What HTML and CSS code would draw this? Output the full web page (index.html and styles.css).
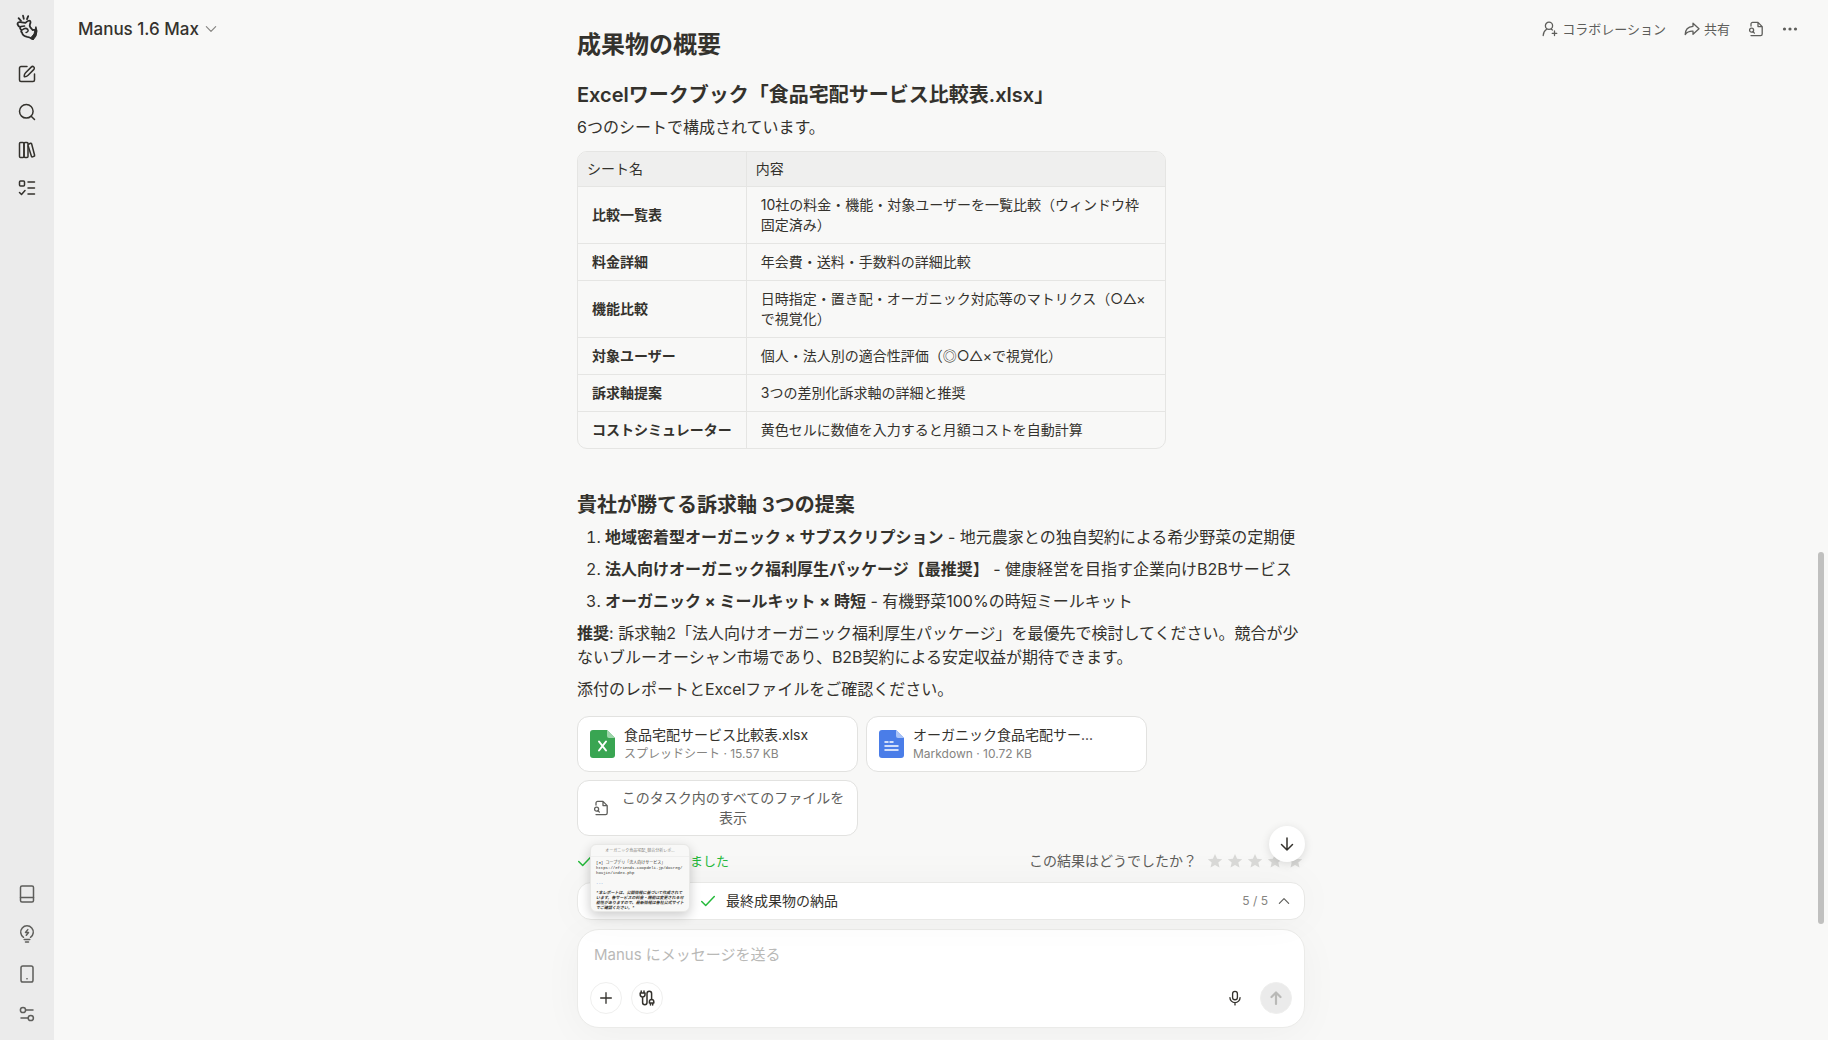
FILE: index.html
```html
<!DOCTYPE html>
<html lang="ja">
<head>
    <meta charset="UTF-8">
    <meta name="viewport" content="width=device-width, initial-scale=1.0">
    <title>Manus</title>
    <link rel="stylesheet" href="styles.css">
</head>
<body>
    <aside class="sidebar">
        <a class="logo" href="#" aria-label="Manus">
            <svg width="22" height="28" viewBox="0 0 22 28">
                <path d="M2.6 4.2l2.4 2.600M7 1.600l.8 3.200M12.200 2.200l-1.200 3" stroke-width="1.8"/>
                <path d="M1.6 10.6c-.4-1.7.8-2.6 2.6-2.4l5.2.6c1.2-1.2 2.6-2.6 4-2.2 1.6.4 1.2 2.2.6 3.4-.6 1.4-.4 2.4.4 3.4l2.2 2.6c1.4-.2 2.6-.2 3.6.4l-1.2 5.2-3.2 3.2c-1.4-1.2-2.8-1.8-4.6-2-2.6-.4-4.8-1.8-5.2-4.2-.8-.8-1-1.8-.6-2.8-1.4-.6-1.6-1.8-1-2.8-1.4-.2-2.4-1-2.8-2.4z" stroke-width="1.8"/>
                <path d="M5 12.600l3.600-.6M6.500 15.800c1.800-1.600 4-1.600 5.200-.4 1 1.200.2 2.800-1.600 3" stroke-width="1.5"/>
                <path d="M20 13l1 4-1 5-3 4-2-2.500 3-3.500 1-4z" fill="currentColor" stroke-width="1"/>
            </svg>
        </a>
        <nav class="side-nav">
            <button class="side-btn" aria-label="新しいタスク">
                <svg class="icon" viewBox="0 0 18 18"><path d="M9 1.500H3A1.500 1.500 0 0 0 1.500 3v12A1.500 1.500 0 0 0 3 16.500h12a1.500 1.500 0 0 0 1.500-1.500V9"/><path d="M6.300 11.700c-.300-1.700.200-2.800 1.300-3.900l5.600-5.700c.8-.8 1.900-.8 2.600-.1s.7 1.800-.1 2.600l-5.600 5.700c-1.100 1.100-2.200 1.600-3.800 1.400z"/></svg>
            </button>
            <button class="side-btn" aria-label="検索">
                <svg class="icon" viewBox="0 0 18 18"><circle cx="8.300" cy="8.300" r="6.800"/><path d="M13.200 13.200l3.300 3.300"/></svg>
            </button>
            <button class="side-btn" aria-label="ライブラリ">
                <svg class="icon" viewBox="0 0 18 18"><rect x="1.500" y="1.500" width="4.500" height="15" rx="1"/><rect x="6" y="1.500" width="4" height="15" rx="1"/><path d="M10.500 3.200l2-.9c.5-.2.900 0 1.100.5l3 11.500c.1.500-.1.900-.6 1l-1.500.6c-.5.200-.9 0-1-.5L10.200 5"/></svg>
            </button>
            <button class="side-btn" aria-label="タスク一覧">
                <svg class="icon" viewBox="0 0 18 18"><rect x="1.500" y="2" width="5" height="5" rx="1"/><path d="M10 3h6.500M10 9h6.500M10 15h6.500M1.500 13.500l2 2 3.500-4"/></svg>
            </button>
        </nav>
        <div class="side-bottom">
            <button class="side-btn" aria-label="ガイド">
                <svg class="icon" viewBox="0 0 18 18"><rect x="2.500" y="1" width="13" height="16" rx="1.500"/><path d="M2.500 12.500h13"/></svg>
            </button>
            <button class="side-btn" aria-label="ヒント">
                <svg class="icon" viewBox="0 0 18 18"><path d="M5.500 12.300a6.300 6.300 0 1 1 7 0M6.200 14.600h5.600M7.500 17h3M9.800 4.600L7.500 7.500h3L8.300 10.300"/></svg>
            </button>
            <button class="side-btn" aria-label="モバイルアプリ">
                <svg class="icon" viewBox="0 0 18 18"><rect x="3" y="1" width="12" height="16" rx="1.800"/><path d="M8.900 13.800h.2"/></svg>
            </button>
            <button class="side-btn" aria-label="設定">
                <svg class="icon" viewBox="0 0 18 18"><circle cx="5" cy="5" r="2.600"/><path d="M7.600 5H15M3 13h7.200"/><circle cx="12.800" cy="13" r="2.600"/></svg>
            </button>
        </div>
    </aside>

    <main class="main">
        <header class="topbar">
            <button class="model-btn">Manus 1.6 Max
                <svg class="chevron" viewBox="0 0 12 12"><path d="M2 4l4 4 4-4"/></svg>
            </button>
            <div class="actions">
                <button class="action-btn">
                    <svg class="icon-sm" viewBox="0 0 16 16"><circle cx="7" cy="4.800" r="3.600"/><path d="M1.200 14.500c.2-3 1.500-5 3.400-6.200M9.300 8.200l1.200.8M12.500 10v4.600M10.200 12.300h4.600"/></svg>
                    コラボレーション
                </button>
                <button class="action-btn">
                    <svg class="icon-sm" viewBox="0 0 16 16"><path d="M9 2.200l6 5.600-6 5.400v-3C5 10 3 11 1.200 13.500 1.200 9 3.500 5.800 9 5.300z"/></svg>
                    共有
                </button>
                <button class="action-btn" aria-label="ファイル">
                    <svg class="icon-sm" viewBox="0 0 16 16"><path d="M3 5V3a1.600 1.600 0 0 1 1.600-1.600h5.400L14.200 5.600v7.400a1.600 1.600 0 0 1-1.600 1.600H3M10 1.400v4.200h4.200"/><circle cx="3.600" cy="9.200" r="2"/><path d="M5 10.700l1.400 1.400"/></svg>
                </button>
                <button class="action-btn" aria-label="その他">
                    <svg class="icon-sm dots" viewBox="0 0 16 16"><circle cx="2.500" cy="8" r="1.600"/><circle cx="8" cy="8" r="1.600"/><circle cx="13.500" cy="8" r="1.600"/></svg>
                </button>
            </div>
        </header>

        <article class="message">
            <h1>成果物の概要</h1>
            <h2>Excelワークブック「食品宅配サービス比較表.xlsx」</h2>
            <p>6つのシートで構成されています。</p>
            <table class="sheets">
                <thead>
                    <tr><th>シート名</th><th>内容</th></tr>
                </thead>
                <tbody>
                    <tr><td><strong>比較一覧表</strong></td><td>10社の料金・機能・対象ユーザーを一覧比較（ウィンドウ枠固定済み）</td></tr>
                    <tr><td><strong>料金詳細</strong></td><td>年会費・送料・手数料の詳細比較</td></tr>
                    <tr><td><strong>機能比較</strong></td><td>日時指定・置き配・オーガニック対応等のマトリクス（○△×で視覚化）</td></tr>
                    <tr><td><strong>対象ユーザー</strong></td><td>個人・法人別の適合性評価（◎○△×で視覚化）</td></tr>
                    <tr><td><strong>訴求軸提案</strong></td><td>3つの差別化訴求軸の詳細と推奨</td></tr>
                    <tr><td><strong>コストシミュレーター</strong></td><td>黄色セルに数値を入力すると月額コストを自動計算</td></tr>
                </tbody>
            </table>

            <h2>貴社が勝てる訴求軸 3つの提案</h2>
            <ol>
                <li><strong>地域密着型オーガニック × サブスクリプション</strong> - 地元農家との独自契約による希少野菜の定期便</li>
                <li><strong>法人向けオーガニック福利厚生パッケージ【最推奨】</strong> - 健康経営を目指す企業向けB2Bサービス</li>
                <li><strong>オーガニック × ミールキット × 時短</strong> - 有機野菜100%の時短ミールキット</li>
            </ol>
            <p><strong>推奨</strong>: 訴求軸2「法人向けオーガニック福利厚生パッケージ」を最優先で検討してください。競合が少ないブルーオーシャン市場であり、B2B契約による安定収益が期待できます。</p>
            <p>添付のレポートとExcelファイルをご確認ください。</p>

            <div class="files">
                <button class="file">
                    <svg class="file-icon" viewBox="0 0 25 28"><path d="M3 0h14l8 8v17a3 3 0 0 1-3 3H3a3 3 0 0 1-3-3V3a3 3 0 0 1 3-3z" fill="#39a552"/><path d="M17 0l8 8h-6a2 2 0 0 1-2-2z" fill="#9dd5aa"/><path d="M9 11.500l7 9M16 11.500l-7 9" stroke="#fff" stroke-width="2" fill="none"/></svg>
                    <span class="file-text">
                        <span class="file-name">食品宅配サービス比較表.xlsx</span>
                        <span class="file-meta">スプレッドシート · 15.57 KB</span>
                    </span>
                </button>
                <button class="file">
                    <svg class="file-icon" viewBox="0 0 25 28"><path d="M3 0h14l8 8v17a3 3 0 0 1-3 3H3a3 3 0 0 1-3-3V3a3 3 0 0 1 3-3z" fill="#4a7de8"/><path d="M17 0l8 8h-6a2 2 0 0 1-2-2z" fill="#a9c3f7"/><path d="M6 12h3M11 12h3M6 16h13M6 20h13" stroke="#fff" stroke-width="1.500" fill="none"/></svg>
                    <span class="file-text">
                        <span class="file-name">オーガニック食品宅配サー...</span>
                        <span class="file-meta">Markdown · 10.72 KB</span>
                    </span>
                </button>
                <button class="file file-all">
                    <svg class="icon-sm" viewBox="0 0 16 16"><path d="M3 5V3a1.600 1.600 0 0 1 1.600-1.600h5.400L14.200 5.600v7.400a1.600 1.600 0 0 1-1.600 1.600H3M10 1.400v4.200h4.200"/><circle cx="3.600" cy="9.200" r="2"/><path d="M5 10.700l1.400 1.400"/></svg>
                    <span>このタスク内のすべてのファイルを表示</span>
                </button>
            </div>

            <div class="status">
                <span class="done">
                    <svg class="check" viewBox="0 0 14 14"><path d="M1.500 7.500l3.500 3.500 7.500-8"/></svg>
                    タスクが完了しました
                </span>
                <div class="rating">
                    <span>この結果はどうでしたか？</span>
                    <div class="stars">
                        <button class="star" aria-label="1"><svg viewBox="0 0 16 16"><path d="M8 1l2.100 4.700 5.100.5-3.900 3.400 1.200 5L8 12l-4.500 2.600 1.200-5L.8 6.200l5.100-.5z"/></svg></button>
                        <button class="star" aria-label="2"><svg viewBox="0 0 16 16"><path d="M8 1l2.100 4.700 5.100.5-3.900 3.400 1.200 5L8 12l-4.500 2.600 1.200-5L.8 6.200l5.100-.5z"/></svg></button>
                        <button class="star" aria-label="3"><svg viewBox="0 0 16 16"><path d="M8 1l2.100 4.700 5.100.5-3.900 3.400 1.200 5L8 12l-4.500 2.600 1.200-5L.8 6.200l5.100-.5z"/></svg></button>
                        <button class="star" aria-label="4"><svg viewBox="0 0 16 16"><path d="M8 1l2.100 4.700 5.100.5-3.900 3.400 1.200 5L8 12l-4.500 2.600 1.200-5L.8 6.200l5.100-.5z"/></svg></button>
                        <button class="star" aria-label="5"><svg viewBox="0 0 16 16"><path d="M8 1l2.100 4.700 5.100.5-3.900 3.400 1.200 5L8 12l-4.500 2.600 1.200-5L.8 6.200l5.100-.5z"/></svg></button>
                    </div>
                </div>
            </div>
        </article>

        <div class="dock">
            <button class="scroll-down" aria-label="一番下へ">
                <svg class="icon" viewBox="0 0 18 18"><path d="M9 3v12M3.500 9.500L9 15l5.500-5.500"/></svg>
            </button>
            <div class="progress">
                <div class="preview">
                    <div class="preview-title">オーガニック食品宅配_競合分析レポ...</div>
                    <div class="preview-body">
                        <p>[3] コープデリ「法人向けサービス」<br>https://efriends.coopdeli.jp/docreg/<br>houjin/index.php</p>
                        <p class="preview-rule">---</p>
                        <p class="preview-note">*本レポートは、公開情報に基づいて作成されています。各サービスの料金・機能は変更される可能性がありますので、最新情報は各社公式サイトでご確認ください。*</p>
                    </div>
                </div>
                <svg class="check" viewBox="0 0 14 14"><path d="M1.500 7.500l3.500 3.500 7.500-8"/></svg>
                <span class="step">最終成果物の納品</span>
                <span class="count">5 / 5</span>
                <button class="toggle" aria-label="開く"><svg class="chevron" viewBox="0 0 12 12"><path d="M2 8l4-4 4 4"/></svg></button>
            </div>
            <form class="composer">
                <textarea rows="1" aria-label="メッセージ" placeholder="Manus にメッセージを送る"></textarea>
                <div class="tools">
                    <button type="button" class="round" aria-label="追加"><svg class="icon" viewBox="0 0 18 18"><path d="M9 3v12M3 9h12"/></svg></button>
                    <button type="button" class="round" aria-label="コネクタ">
                        <svg class="icon" viewBox="0 0 16 16"><path d="M2.200 1v2M5 1v2M1.200 3H6v1.600a2.400 2.400 0 0 1-4.800 0zM3.600 7v5.500a2.200 2.200 0 0 0 4.400 0v-9a2.300 2.300 0 0 1 4.600 0V9.500"/><path d="M10.400 13v-1.200a2.200 2.200 0 0 1 4.400 0V13zM11.500 13v2M13.700 13v2"/></svg>
                    </button>
                    <button type="button" class="mic" aria-label="音声入力"><svg class="icon" viewBox="0 0 18 18"><rect x="6.300" y="1.500" width="5.400" height="9.500" rx="2.700"/><path d="M3.300 8.500a5.700 5.700 0 0 0 11.400 0M9 14.200v2.600"/></svg></button>
                    <button type="submit" class="send" aria-label="送信" disabled><svg class="icon" viewBox="0 0 18 18"><path d="M9 15V4M4.500 8L9 3.500 13.500 8"/></svg></button>
                </div>
            </form>
        </div>
        <div class="scroll-thumb"></div>
    </main>
</body>
</html>
```
FILE: styles.css
```css
* {
    box-sizing: border-box;
}
body {
    display: flex;
    min-height: 100vh;
    margin: 0;
    background-color: #f8f8f7;
    color: #34322d;
    font-family: Inter, "Noto Sans CJK JP", sans-serif;
    font-size: 16px;
    line-height: 24px;
}
button {
    display: flex;
    align-items: center;
    padding: 0;
    border: none;
    background: none;
    color: inherit;
    font: inherit;
    cursor: pointer;
}
svg {
    flex: none;
    fill: none;
    stroke: currentColor;
    stroke-width: 1.5;
    stroke-linecap: round;
    stroke-linejoin: round;
}
.icon {
    width: 18px;
    height: 18px;
}
.icon-sm {
    width: 16px;
    height: 16px;
    stroke-width: 1.3;
}
.chevron {
    width: 14px;
    height: 14px;
    stroke: #858481;
    stroke-width: 1;
}

/* sidebar */
.sidebar {
    display: flex;
    flex-direction: column;
    align-items: center;
    width: 54px;
    padding: 14px 0 10px;
    background-color: #ebebeb;
}
.logo {
    display: flex;
    height: 28px;
    margin-bottom: 16px;
    color: #2b2b2a;
}
.side-nav {
    display: flex;
    flex-direction: column;
    gap: 6px;
}
.side-btn {
    justify-content: center;
    width: 32px;
    height: 32px;
}
.side-bottom {
    display: flex;
    flex-direction: column;
    gap: 8px;
    margin-top: auto;
    color: #5e5e5b;
}

/* main area */
.main {
    position: relative;
    display: flex;
    flex: 1;
    flex-direction: column;
    align-items: center;
}
.topbar {
    position: absolute;
    top: 0;
    left: 0;
    right: 0;
    display: flex;
    align-items: center;
    justify-content: space-between;
    height: 57px;
    padding: 0 30px 0 24px;
}
.model-btn {
    gap: 5px;
    font-size: 17px;
    font-weight: 500;
}
.actions {
    display: flex;
    gap: 18px;
    color: #5e5e5b;
    font-size: 13px;
}
.action-btn {
    gap: 4px;
}
.dots {
    fill: currentColor;
    stroke: none;
}
.message {
    width: 100%;
    max-width: 728px;
    padding-top: 29px;
}
h1 {
    margin: 0 0 20px;
    font-size: 24px;
    line-height: 32px;
}
h2 {
    margin: 0 0 6px;
    font-size: 20px;
    font-weight: 600;
    line-height: 28px;
}
p {
    margin: 0 0 8px;
}
strong {
    font-weight: 700;
}
.sheets {
    width: 589px;
    max-width: 100%;
    margin: 12px 0 42px;
    border: 1px solid #e5e5e3;
    border-radius: 10px;
    border-spacing: 0;
    overflow: hidden;
    font-size: 14px;
    line-height: 20px;
}
.sheets th {
    padding: 7px 9px;
    background-color: #efefee;
    font-weight: 400;
    text-align: left;
}
.sheets td {
    padding: 8px 14px;
    border-top: 1px solid #e5e5e3;
}
.sheets th + th,
.sheets td + td {
    border-left: 1px solid #e5e5e3;
}
.sheets td:first-child {
    white-space: nowrap;
}
ol {
    display: flex;
    flex-direction: column;
    gap: 8px;
    margin: 0 0 8px;
    padding-left: 28px;
}

/* attachments */
.files {
    display: flex;
    flex-wrap: wrap;
    gap: 8px;
    margin-top: 15px;
}
.file {
    gap: 9px;
    width: 281px;
    height: 56px;
    padding: 0 12px;
    border: 1px solid #e2e2e0;
    border-radius: 12px;
    background-color: #fff;
    text-align: left;
}
.file-icon {
    width: 25px;
    height: 28px;
    stroke: none;
}
.file-text {
    display: flex;
    flex-direction: column;
}
.file-name {
    font-size: 14px;
    line-height: 20px;
    white-space: nowrap;
}
.file-meta {
    color: #858481;
    font-size: 12px;
    line-height: 18px;
}
.file-all {
    gap: 12px;
    padding: 0 12px 0 15px;
    color: #5e5e5b;
    font-size: 14px;
    line-height: 20px;
    text-align: center;
}
.status {
    display: flex;
    align-items: center;
    justify-content: space-between;
    height: 42px;
    margin-top: 4px;
    padding-right: 2px;
}
.done {
    display: flex;
    align-items: center;
    gap: 6px;
    color: #25ba3b;
    font-size: 13px;
}
.check {
    width: 16px;
    height: 16px;
    stroke: #25ba3b;
    stroke-width: 1.3;
}
.rating {
    display: flex;
    align-items: center;
    gap: 10px;
    color: #5e5e5b;
    font-size: 14px;
}
.stars {
    display: flex;
    gap: 4px;
}
.star svg {
    width: 16px;
    height: 16px;
    fill: #d9d9d7;
    stroke: none;
}

/* bottom dock */
.dock {
    position: relative;
    display: flex;
    flex-direction: column;
    gap: 9px;
    width: 100%;
    max-width: 728px;
    margin-top: auto;
    padding-bottom: 12px;
}
.scroll-down {
    position: absolute;
    top: -56px;
    right: 0;
    justify-content: center;
    width: 36px;
    height: 36px;
    border-radius: 50%;
    background-color: #fff;
    box-shadow: 0 2px 10px rgba(0, 0, 0, 0.12);
}
.progress {
    position: relative;
    display: flex;
    align-items: center;
    height: 38px;
    padding: 0 13px 0 122px;
    border: 1px solid #e8e8e6;
    border-radius: 14px;
    background-color: #fff;
    box-shadow: 0 0 40px rgba(0, 0, 0, 0.04);
    font-size: 14px;
}
.step {
    margin-left: 10px;
}
.count {
    margin-left: auto;
    color: #858481;
    font-size: 12px;
}
.toggle {
    margin-left: 9px;
}
.toggle .chevron {
    stroke: #5e5e5b;
}
.preview {
    position: absolute;
    bottom: 7px;
    left: 12px;
    width: 100px;
    height: 68px;
    border: 1px solid #e8e8e6;
    border-radius: 6px;
    background-color: #f8f8f7;
    box-shadow: 0 4px 12px rgba(0, 0, 0, 0.2);
    overflow: hidden;
    font-size: 4px;
    line-height: 5px;
}
.preview-title {
    padding: 3px;
    border-bottom: 1px solid #efefee;
    color: #858481;
    text-align: center;
}
.preview-body {
    padding: 4px 5px;
    font-family: "Liberation Mono", "Noto Sans CJK JP", monospace;
}
.preview-body p {
    margin: 0 0 5px;
}
.preview-rule {
    color: #3b82d6;
}
.preview-note {
    font-style: italic;
    font-weight: 700;
}

/* message box */
.composer {
    display: flex;
    flex-direction: column;
    gap: 15px;
    padding: 13px 12px;
    border: 1px solid #ebebe9;
    border-radius: 22px;
    background-color: #fff;
    box-shadow: 0 6px 40px rgba(0, 0, 0, 0.04);
}
textarea {
    display: block;
    height: 24px;
    padding: 0 4px;
    border: none;
    outline: none;
    background: none;
    color: inherit;
    font: inherit;
    font-size: 15px;
    line-height: 24px;
    resize: none;
}
textarea::placeholder {
    color: #b9b9b7;
}
.tools {
    display: flex;
    align-items: center;
    gap: 9px;
}
.round,
.send {
    justify-content: center;
    width: 32px;
    height: 32px;
    border: 1px solid #efefee;
    border-radius: 50%;
}
.round .icon,
.mic .icon {
    width: 16px;
    height: 16px;
}
.mic {
    justify-content: center;
    width: 32px;
    height: 32px;
    margin-left: auto;
}
.send {
    background-color: #ebebeb;
    color: #b9b9b7;
}
.send .icon {
    stroke-width: 2.2;
}
.scroll-thumb {
    position: absolute;
    top: 552px;
    right: 4px;
    width: 6px;
    height: 372px;
    border-radius: 3px;
    background-color: #c0c0bf;
}
```
